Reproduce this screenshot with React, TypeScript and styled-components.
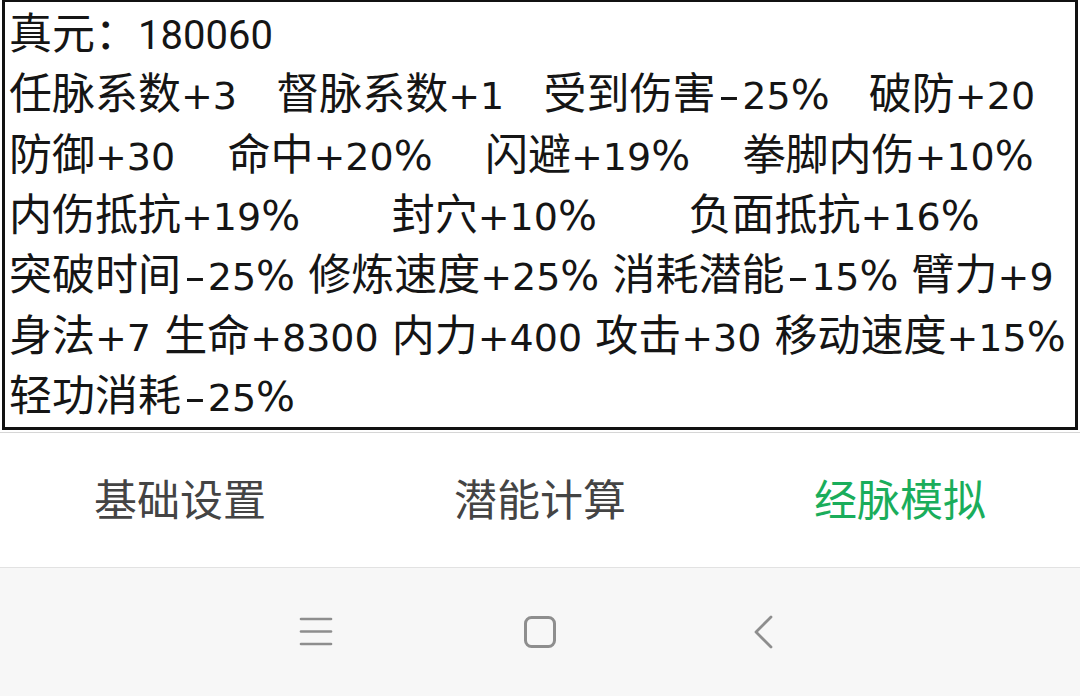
import React from 'react';
import styled, { createGlobalStyle } from 'styled-components';

const GlobalStyle = createGlobalStyle`
  html, body {
    margin: 0;
    padding: 0;
    background: #ffffff;
  }
  body {
    font-family: Roboto, "Noto Sans CJK SC", sans-serif;
  }
`;

const Screen = styled.div`
  width: 1080px;
  height: 696px;
  display: flex;
  flex-direction: column;
  overflow: hidden;
  background: #ffffff;
`;

const StatBox = styled.div`
  margin: -1px 2px 0 2px;
  border: 3px solid #111111;
  padding: 0 0 3px 4px;
  display: flex;
  flex-direction: column;
`;

const Row = styled.div`
  box-sizing: border-box;
  height: 60.3px;
  padding-bottom: 4px;
  display: flex;
  align-items: center;
  font-family: "DejaVu Sans", "Noto Sans CJK SC", sans-serif;
  font-size: 38px;
  word-spacing: 1px;
  color: #151515;
  white-space: pre;
`;

const Stat = styled.span``;

// Chinese runs are a touch larger than the Latin figures in the app font
const Han = styled.span`
  font-family: "Noto Sans CJK SC", sans-serif;
  font-size: 43px;
`;

const Dash = styled.span`
  display: inline-block;
  margin: 0 6.5px;
  transform: scaleX(1.6);
`;

const Pct = styled.span`
  font-size: 41px;
`;

const Value = styled.span`
  font-family: Roboto, "Noto Sans CJK SC", sans-serif;
  font-size: 40px;
`;

const TabBar = styled.div`
  margin-top: 2px;
  height: 134px;
  border-top: 1px solid #d6d6d6;
  display: grid;
  grid-template-columns: repeat(3, 1fr);
  align-items: center;
`;

const Tab = styled.div<{ $active?: boolean }>`
  text-align: center;
  font-size: 43px;
  padding-bottom: 6px;
  color: ${p => (p.$active ? '#1aad5b' : '#444444')};
`;

const NavBar = styled.div`
  flex: 1;
  border-top: 1px solid #e2e2e2;
  background: #f7f7f7;
  display: flex;
  align-items: center;
  justify-content: center;
  gap: 190px;
`;

const NavIcon = styled.svg`
  width: 34px;
  height: 34px;
  display: block;
`;

// spaces: how many blanks the app puts between two entries on that line
const rows: { spaces: number; items: string[] }[] = [
  { spaces: 3, items: ['任脉系数+3', '督脉系数+1', '受到伤害-25%', '破防+20'] },
  { spaces: 4, items: ['防御+30', '命中+20%', '闪避+19%', '拳脚内伤+10%'] },
  { spaces: 7, items: ['内伤抵抗+19%', '封穴+10%', '负面抵抗+16%'] },
  { spaces: 1, items: ['突破时间-25%', '修炼速度+25%', '消耗潜能-15%', '臂力+9'] },
  { spaces: 1, items: ['身法+7', '生命+8300', '内力+400', '攻击+30', '移动速度+15%'] },
  { spaces: 1, items: ['轻功消耗-25%'] },
];

const tabs = ['基础设置', '潜能计算', '经脉模拟'];

function splitText(text: string) {
  return text.split(/([\u4e00-\u9fff\uff1a]+|-|%)/).filter(Boolean).map((part, i) => {
    if (part === '-') return <Dash key={i}>-</Dash>;
    if (part === '%') return <Pct key={i}>%</Pct>;
    if (/[\u4e00-\u9fff\uff1a]/.test(part)) return <Han key={i}>{part}</Han>;
    return <React.Fragment key={i}>{part}</React.Fragment>;
  });
}

function App() {
  return (
    <>
      <GlobalStyle />
      <Screen>
        <StatBox>
          <Row>
            <Stat>
              <Han>真元：</Han>
              <Value>180060</Value>
            </Stat>
          </Row>
          {rows.map((r, i) => (
            <Row key={i}>
              {r.items.map((t, j) => (
                <Stat key={t}>
                  {splitText(t)}
                  {j < r.items.length - 1 ? ' '.repeat(r.spaces) : ''}
                </Stat>
              ))}
            </Row>
          ))}
        </StatBox>

        <TabBar>
          {tabs.map((t, i) => (
            <Tab key={t} $active={i === 2}>
              {t}
            </Tab>
          ))}
        </TabBar>

        <NavBar>
          <NavIcon viewBox="0 0 34 34">
            <g stroke="#8e8e8e" strokeWidth="2.6" strokeLinecap="round">
              <line x1="2" y1="4" x2="32" y2="4" />
              <line x1="2" y1="16.5" x2="32" y2="16.5" />
              <line x1="2" y1="29" x2="32" y2="29" />
            </g>
          </NavIcon>
          <NavIcon viewBox="0 0 34 34">
            <rect x="2.5" y="2.5" width="29" height="29" rx="6" fill="none" stroke="#8e8e8e" strokeWidth="3" />
          </NavIcon>
          <NavIcon viewBox="0 0 34 34">
            <polyline points="24,2 9,17 24,32" fill="none" stroke="#8e8e8e" strokeWidth="2.8" strokeLinecap="round" strokeLinejoin="round" />
          </NavIcon>
        </NavBar>
      </Screen>
    </>
  );
}

export default App;
